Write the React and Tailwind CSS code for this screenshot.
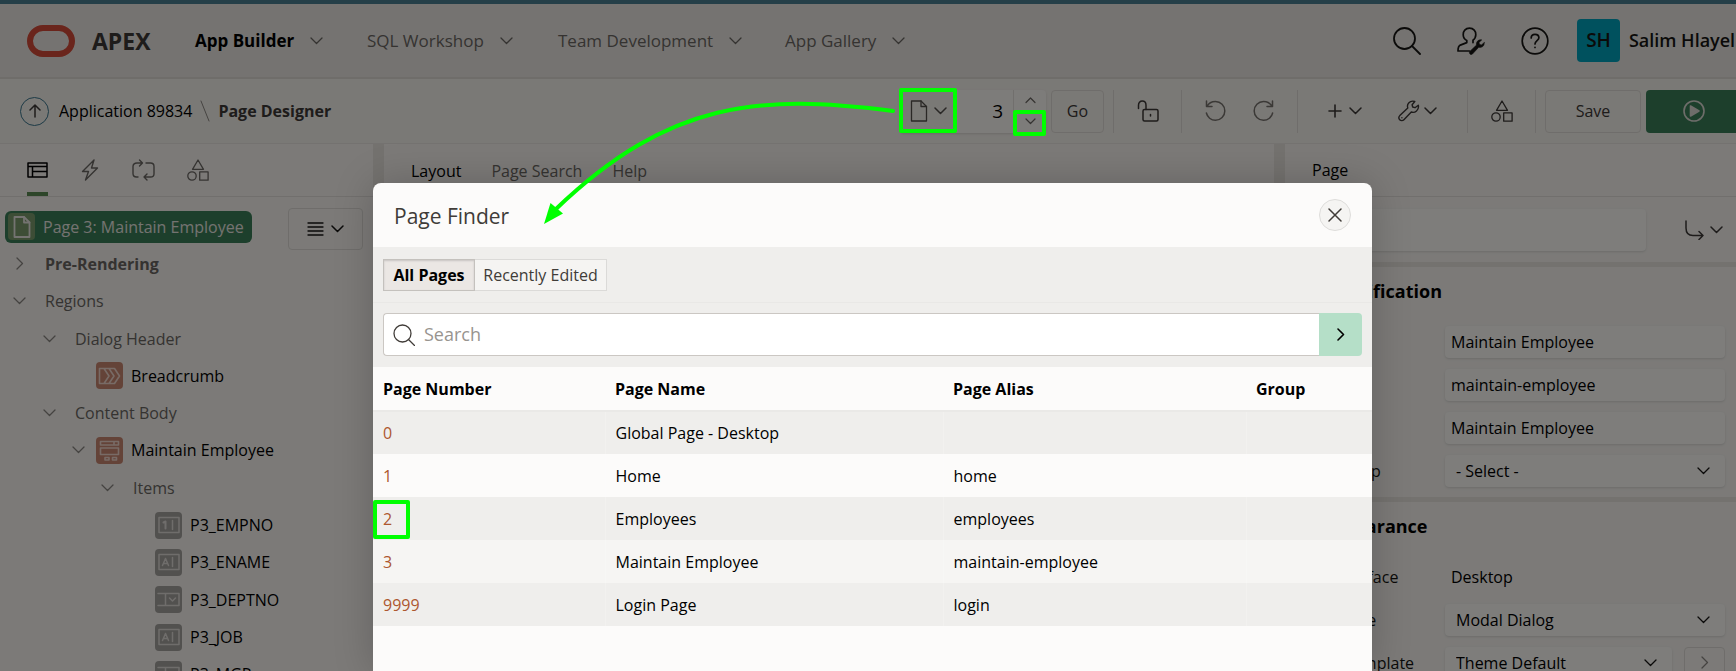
import React from "react";

function Icon({ w, h = w, sw = 1.3, className = "", children }) {
  return (
    <svg
      width={w}
      height={h}
      viewBox={`0 0 ${w} ${h}`}
      fill="none"
      stroke="currentColor"
      strokeWidth={sw}
      strokeLinecap="round"
      strokeLinejoin="round"
      aria-hidden="true"
      className={`shrink-0 ${className}`}
    >
      {children}
    </svg>
  );
}

const ChevronDown = ({ className = "", sw = 1.3 }) => (
  <Icon w={13} h={8} sw={sw} className={className}>
    <path d="M1 1l5.500 5.500L12 1" />
  </Icon>
);
const ChevronRight = ({ className = "", sw = 1.3 }) => (
  <Icon w={8} h={13} sw={sw} className={className}>
    <path d="M1 1l5.500 5.500L1 12" />
  </Icon>
);
const Shapes = ({ className = "" }) => (
  <Icon w={22} h={22} className={className}>
    <path d="M11 1l5.500 9.300h-11z" />
    <circle cx="5" cy="17" r="4.200" />
    <path d="M12.700 12.900h8.400v8.300h-8.400z" />
  </Icon>
);
const PageIcon = ({ sw = 1.3 }) => (
  <Icon w={18} h={22} sw={sw}>
    <path d="M1.500 1h9.500l5.500 5.500V21h-15z" />
    <path d="M11 1v5.500h5.500" />
  </Icon>
);
const Wrench = () => (
  <Icon w={22} h={22} sw={1.4}>
    <path d="M20.300 5.200l-3.300 2.500-2.300-.7-.6-2.300 2.700-3.200c-2.400-.7-4.700-.1-6.100 1.500-1.300 1.500-1.500 3.300-.9 5L1.800 15.600c-1.100 1.200-1.100 3-.1 4.100 1.100 1.200 3.100 1.200 4.200 0l7.400-7.700c1.700.6 3.800.2 5.200-1.100 1.600-1.500 2.300-3.600 1.800-5.700z" />
    <path d="M3.900 17.600v.1" />
  </Icon>
);

const NAV = ["App Builder", "SQL Workshop", "Team Development", "App Gallery"];

function Header() {
  return (
    <header className="flex h-[75px] shrink-0 items-center border-b-2 border-[#dedad5] bg-[#eae7e2] pl-[27px]">
      <a href="#home" className="flex w-[168px] items-center gap-[17px]">
        <svg width="48" height="32" viewBox="0 0 48 32" fill="none" aria-hidden="true">
          <rect x="3" y="3" width="42" height="26" rx="13" stroke="#d44a38" strokeWidth="6" />
        </svg>
        <span className="text-[23px] leading-8 font-bold text-[#3c3836]">APEX</span>
      </a>
      <nav className="grid grid-cols-[172px_191px_227px_auto]">
        {NAV.map((item, i) => (
          <button
            key={item}
            className={`flex items-center gap-4 text-left text-[17px] whitespace-nowrap ${
              i === 0 ? "font-bold text-black" : "text-[#6b6763]"
            }`}
          >
            {item}
            <ChevronDown className="text-[#6b6763]" />
          </button>
        ))}
      </nav>
      <div className="ml-auto flex items-center">
        <button aria-label="Search" className="mr-9">
          <Icon w={28} sw={1.8}>
            <circle cx="11.500" cy="11.500" r="10.500" />
            <path d="M19 19l8 8" />
          </Icon>
        </button>
        <button aria-label="Administration" className="mr-9">
          <Icon w={28} sw={1.7}>
            <path d="M12.500 1.200c4 0 6.500 3 6.300 6.500-.1 2.200-1 4.200-2.800 5.400M12.500 1.200C8.500 1.200 6 4.200 6.200 7.700c.1 2.500 1.400 4.700 3.600 5.700v2.200l-6.500 2.500C1.500 19 1 20.500 1 24h11.500M16 13.100v2.500" />
            <path
              d="M27.200 15.700l-2.900 2.300-1.900-.7-.4-1.900 2.700-2.500c-2.600-.6-5.200 1-5.300 4.100l.1 1.100-6.700 6.300c-1.400 1.400.9 4.200 2.600 2.700l6.300-6.800c3.400.7 5.900-1.500 5.500-4.600z"
              fill="currentColor"
              strokeWidth="0.600"
            />
          </Icon>
        </button>
        <button aria-label="Help" className="mr-7">
          <Icon w={28} sw={1.7}>
            <circle cx="14" cy="14" r="12.800" />
            <path d="M10.200 11c0-2.200 1.600-3.700 3.800-3.700s3.900 1.400 3.900 3.500c0 2.800-3.900 3-3.900 6.200" />
            <path d="M14 20.300v.2" />
          </Icon>
        </button>
        <button className="flex items-center gap-2 text-[18px] font-semibold whitespace-nowrap">
          <span className="flex size-[43px] items-center justify-center rounded-sm bg-[#00a2bc] text-[19px]">SH</span>
          <span className="w-[108px]">Salim Hlayel</span>
        </button>
      </div>
    </header>
  );
}

function Toolbar() {
  return (
    <div className="flex h-[65px] shrink-0 items-center justify-between border-b border-[#e9e5e0] bg-[#f5f2ed] text-[#3c3836]">
      <nav aria-label="Breadcrumb" className="flex items-center pl-5 text-base whitespace-nowrap">
        <a href="#up" aria-label="Up" className="flex size-[29px] items-center justify-center rounded-full border border-[#39758c]">
          <Icon w={12} h={14} sw={1.5}>
            <path d="M6 13V1M1 6l5-5 5 5" />
          </Icon>
        </a>
        <a href="#app" className="ml-[10px] text-black">Application 89834</a>
        <Icon w={10} h={22} sw={1} className="mx-2 text-[#8b8782]">
          <path d="M1 1l8 20" />
        </Icon>
        <span className="font-bold">Page Designer</span>
      </nav>
      <div className="flex h-[43px] items-stretch">
        <div className="flex w-[146px] rounded-sm bg-[#faf8f5] shadow">
          <button aria-label="Page Finder" className="flex w-14 items-center justify-center gap-[6px] bg-[#f5f2ed] text-[#55514d]">
            <PageIcon />
            <ChevronDown sw={1.5} />
          </button>
          <input
            aria-label="Page number"
            defaultValue="3"
            className="w-[57px] min-w-0 bg-transparent pr-[10px] text-right text-[19px] text-black"
          />
          <div className="flex flex-1 flex-col border-l border-[#e3dfda] text-[#6b6763]">
            <button aria-label="Next page" className="flex flex-1 items-center justify-center">
              <Icon w={11} h={7} sw={1.2}><path d="M1 5.500L5.500 1 10 5.500" /></Icon>
            </button>
            <button aria-label="Previous page" className="flex flex-1 items-center justify-center">
              <Icon w={11} h={7} sw={1.2}><path d="M1 1l4.500 4.500L10 1" /></Icon>
            </button>
          </div>
        </div>
        <button className="mr-[9px] ml-[5px] w-[53px] rounded-sm border border-[#dfdbd6] text-base">Go</button>
        <button aria-label="Lock page" className="flex w-[68px] items-center justify-center border-l border-[#dfdbd6]">
          <Icon w={22} h={22} sw={1.5}>
            <rect x="6" y="9.500" width="15" height="11.500" rx="1.500" />
            <path d="M1.500 8.500V5.200C1.500 2.700 3 1 5.200 1S9 2.700 9 5.200v4.300M13.500 14.500v1.500" />
          </Icon>
        </button>
        <div className="flex w-[116px] items-center justify-center gap-[27px] border-l border-[#dfdbd6] text-[#76726d]">
          <button aria-label="Undo">
            <Icon w={21} h={22} sw={1.5}>
              <path d="M1.500 1v5.500H7M2 6.500C3.500 3.500 6.700 1.500 10.500 1.500c5.200 0 9.300 4.200 9.300 9.400s-4.100 9.400-9.300 9.400c-4.500 0-8.200-3.100-9.100-7.300" />
            </Icon>
          </button>
          <button aria-label="Redo">
            <Icon w={21} h={22} sw={1.5} className="-scale-x-100">
              <path d="M1.500 1v5.500H7M2 6.500C3.500 3.500 6.700 1.500 10.500 1.500c5.200 0 9.300 4.200 9.300 9.400s-4.100 9.400-9.300 9.400c-4.500 0-8.200-3.100-9.100-7.300" />
            </Icon>
          </button>
        </div>
        <div className="flex w-[170px] items-center justify-center gap-9 border-l border-[#dfdbd6]">
          <button aria-label="Create" className="flex items-center gap-[7px]">
            <Icon w={14} sw={1.6}><path d="M7 1v12M1 7h12" /></Icon>
            <ChevronDown sw={1.5} />
          </button>
          <button aria-label="Utilities" className="flex items-center gap-1">
            <Wrench />
            <ChevronDown sw={1.5} />
          </button>
        </div>
        <button aria-label="Shared Components" className="flex w-[68px] items-center justify-center border-l border-[#dfdbd6]">
          <Shapes />
        </button>
        <div className="flex border-l border-[#dfdbd6] pl-[9px]">
          <button className="w-24 rounded-sm border border-[#dfdbd6] text-base">Save</button>
          <button aria-label="Save and Run Page" className="ml-[5px] flex w-[90px] items-center justify-center rounded-l-sm bg-[#3b7f58] pl-[6px] text-[#dcdad5]">
            <Icon w={22} sw={1.6}>
              <circle cx="11" cy="11" r="10" />
              <path d="M7.500 6v10l8.500-5z" fill="currentColor" />
            </Icon>
          </button>
        </div>
      </div>
    </div>
  );
}

const FieldGlyph = ({ kind }) => (
  <Icon w={24} h={18} sw={1.5}>
    {kind === "list" ? (
      <path d="M1 2.500h21v12H1M8.500 2.500v12M12.500 7l3 3 3-3" />
    ) : (
      <>
        <path d="M2 1.500h20v15H2zM15.500 4.500v9" />
        {kind === "number" ? <path d="M6.500 6.500l2-1v7" strokeWidth="2" /> : <path d="M5.500 12.500L8.500 5.500l3 7M6.500 10.500h4" />}
      </>
    )}
  </Icon>
);
const CrumbGlyph = () => (
  <Icon w={23} h={18} sw={1.6}>
    <path d="M1.500 1.500h4.500l5 7.500-5 7.500H1.500zM6 1.500h5l5 7.500-5 7.500H6M11 1.500h5.500L21.500 9l-5 7.500H11" />
  </Icon>
);
const FormGlyph = () => (
  <Icon w={21} h={21} sw={1.6}>
    <path d="M1.500 1.500h18v3.500h-18zM1.500 8h18v6.500h-18zM6 17.500h4v2.500H6zM13.500 17.500h4v2.500h-4zM15 1.500v3.500" />
  </Icon>
);

const TREE = [
  { label: "Pre-Rendering", pad: "pl-4", gap: "w-[29px]", open: false, bold: true },
  { label: "Regions", pad: "pl-[13px]", gap: "w-8", open: true },
  { label: "Dialog Header", pad: "pl-[43px]", gap: "w-8", open: true },
  { label: "Breadcrumb", pad: "pl-24", icon: <CrumbGlyph />, tone: "bg-[#c98770] text-[#f0d6cc]" },
  { label: "Content Body", pad: "pl-[43px]", gap: "w-8", open: true },
  { label: "Maintain Employee", pad: "pl-[72px]", gap: "w-6", open: true, icon: <FormGlyph />, tone: "bg-[#c98770] text-[#f0d6cc]" },
  { label: "Items", pad: "pl-[101px]", gap: "w-8", open: true },
  { label: "P3_EMPNO", pad: "pl-[155px]", icon: <FieldGlyph kind="number" />, tone: "bg-[#a5a29e] text-[#dedbd7]" },
  { label: "P3_ENAME", pad: "pl-[155px]", icon: <FieldGlyph kind="text" />, tone: "bg-[#a5a29e] text-[#dedbd7]" },
  { label: "P3_DEPTNO", pad: "pl-[155px]", icon: <FieldGlyph kind="list" />, tone: "bg-[#a5a29e] text-[#dedbd7]" },
  { label: "P3_JOB", pad: "pl-[155px]", icon: <FieldGlyph kind="text" />, tone: "bg-[#a5a29e] text-[#dedbd7]" },
  { label: "P3_MGR", pad: "pl-[155px]", icon: <FieldGlyph kind="list" />, tone: "bg-[#a5a29e] text-[#dedbd7]" },
];

function TreePane() {
  return (
    <aside className="flex w-[373px] shrink-0 flex-col overflow-hidden bg-[#f8f5f1]">
      <div className="flex h-[53px] shrink-0 items-stretch border-b border-[#e3dfda] pl-[27px] text-[#6b6763]">
        <button aria-label="Rendering" className="mr-[33px] flex items-center border-b-4 border-[#5a8a52] pt-1 text-black">
          <Icon w={21} h={16} sw={1.5}>
            <path d="M1 1h19v14H1zM1 4.500h19M5.500 4.500V15M5.500 9.500H20" />
          </Icon>
        </button>
        <button aria-label="Dynamic Actions" className="mr-[33px] flex items-center">
          <Icon w={18} h={22} sw={1.4}>
            <path d="M13 1L1.500 12.500h6L4.500 21 16.500 9h-6z" />
          </Icon>
        </button>
        <button aria-label="Processing" className="mr-8 flex items-center">
          <Icon w={23} h={22} sw={1.4}>
            <path d="M10.500 4H5C2.700 4 1 5.200 1 7.500v7C1 16.800 2.500 18 4.500 18H6M7.500 1l3 3-3 3M14 4h4.500C20.800 4 22 5.200 22 7.500V15c0 2-1.500 3-3.500 3H12M15 15l-3 3 3 3" />
          </Icon>
        </button>
        <button aria-label="Page Shared Components" className="flex items-center">
          <Shapes />
        </button>
      </div>
      <div className="flex shrink-0 pt-[11px]">
        <ul className="grid h-[485px] flex-1 auto-rows-fr text-base whitespace-nowrap">
          <li className="flex items-center pl-[5px]">
            <button className="flex h-8 items-center gap-2 rounded-md bg-[#3b7f58] pr-2 pl-[3px] text-[#e8e6e2]">
              <span className="flex size-[27px] items-center justify-center rounded-sm bg-[#7a9b6d]">
                <PageIcon sw={1.8} />
              </span>
              Page 3: Maintain Employee
            </button>
          </li>
          {TREE.map((n) => (
            <li key={n.label} className={`flex items-center ${n.pad} ${n.icon ? "text-black" : "text-[#6b6763]"}`}>
              {n.gap && (
                <span className={`flex ${n.gap} text-[#8b8782]`}>{n.open ? <ChevronDown /> : <ChevronRight />}</span>
              )}
              {n.icon && (
                <span className={`mr-2 flex size-[27px] shrink-0 items-center justify-center rounded-sm ${n.tone}`}>{n.icon}</span>
              )}
              <span className={n.bold ? "font-bold" : ""}>{n.label}</span>
            </li>
          ))}
        </ul>
        <button aria-label="Tree menu" className="mr-[10px] flex h-[42px] w-[75px] items-center justify-center gap-[7px] rounded-sm border border-[#dfdbd6]">
          <Icon w={17} h={14} sw={1.3}>
            <path d="M1 1h15M1 5h15M1 9h15M1 13h15" />
          </Icon>
          <ChevronDown sw={1.5} />
        </button>
      </div>
    </aside>
  );
}

const inputCls = "h-8 w-full min-w-0 rounded-sm bg-[#fcfaf7] text-base text-black shadow";

function TextRow({ label, value }) {
  return (
    <label className="flex h-[43px] items-center">
      <span className="w-[152px] shrink-0">{label}</span>
      <input defaultValue={value} className={`${inputCls} px-[6px]`} />
    </label>
  );
}

function SelectRow({ label, value, children }) {
  return (
    <div className="flex h-[43px] items-center">
      <label className="flex min-w-0 flex-1 items-center">
        <span className="w-[152px] shrink-0">{label}</span>
        <span className="grid min-w-0 flex-1 items-center">
          <select className={`${inputCls} col-start-1 row-start-1 appearance-none px-[11px]`}>
            <option>{value}</option>
          </select>
          <ChevronDown className="pointer-events-none col-start-1 row-start-1 mr-[15px] justify-self-end" />
        </span>
      </label>
      {children}
    </div>
  );
}

function PropertyPane() {
  return (
    <aside className="flex w-[451px] shrink-0 flex-col overflow-hidden bg-[#f8f5f1] text-base whitespace-nowrap">
      <div className="flex h-[53px] shrink-0 items-center border-b border-[#e3dfda] pl-[27px] text-black">
        <button>Page</button>
      </div>
      <div className="flex h-[65px] shrink-0 items-center justify-between pr-[13px] pl-2">
        <input aria-label="Filter properties" placeholder="Filter" className="h-[42px] w-[353px] rounded-sm bg-[#fcfaf7] px-3 shadow" />
        <button aria-label="Go to Group" className="flex items-center gap-[6px] text-[#3c3836]">
          <Icon w={19} h={20} sw={1.5}>
            <path d="M1 1v7c0 5 2 7.500 7 7.500h10M14 11.500l4 4-4 4" />
          </Icon>
          <ChevronDown sw={1.5} />
        </button>
      </div>
      <section className="flex shrink-0 flex-col border-t-[5px] border-[#e8e4df] pr-[11px] pb-[5px] pl-2">
        <h2 className="flex h-[53px] items-center pb-1 pl-[27px] text-[18px] font-bold text-black">Identification</h2>
        <TextRow label="Name" value="Maintain Employee" />
        <TextRow label="Alias" value="maintain-employee" />
        <TextRow label="Title" value="Maintain Employee" />
        <SelectRow label="Page Group" value="- Select -" />
      </section>
      <section className="flex shrink-0 flex-col border-t-[5px] border-[#e8e4df] pr-[11px] pl-2">
        <h2 className="flex h-[53px] items-center pb-1 pl-[27px] text-[18px] font-bold text-black">Appearance</h2>
        <div className="flex h-[43px] items-center">
          <span className="w-[152px]">User Interface</span>
          <span className="pl-[6px] text-black">Desktop</span>
        </div>
        <SelectRow label="Page Mode" value="Modal Dialog" />
        <SelectRow label="Dialog Template" value="Theme Default">
          <button aria-label="Open template" className="ml-3 flex h-8 w-[41px] items-center justify-center rounded-sm border border-[#dfdbd6] text-[#8b8782]">
            <ChevronRight />
          </button>
        </SelectRow>
      </section>
    </aside>
  );
}

const PAGES = [
  ["0", "Global Page - Desktop", "", "bg-[#efeeec]"],
  ["1", "Home", "home", "bg-[#fcfbfa]"],
  ["2", "Employees", "employees", "bg-[#efeeec]"],
  ["3", "Maintain Employee", "maintain-employee", "bg-[#f6f5f3]"],
  ["9999", "Login Page", "login", "bg-[#efeeec]"],
];

function PageFinder() {
  return (
    <div
      role="dialog"
      aria-modal="true"
      aria-labelledby="finder-title"
      className="flex-1 overflow-hidden rounded-t-lg bg-[#fcfbfa] text-base text-[#161513] shadow-[0_0_40px_rgba(0,0,0,0.2)]"
    >
      <div className="flex h-16 items-center justify-between px-[21px]">
        <h1 id="finder-title" className="pt-1 text-[21px] text-[#403c38]">Page Finder</h1>
        <button aria-label="Close" className="flex size-8 items-center justify-center rounded-full border border-[#dedddb] bg-[#f5f4f2] text-[#403c38]">
          <Icon w={14} sw={1.5}><path d="M1 1l12 12M13 1L1 13" /></Icon>
        </button>
      </div>
      <div className="flex h-14 items-center border-b border-[#e9e8e6] bg-[#efeeec] px-[10px]">
        <button className="h-8 w-[92px] border border-[#c4c1bd] bg-[#ebe7e4] font-bold text-black shadow-[inset_0_1px_2px_rgba(0,0,0,0.15)]">All Pages</button>
        <button className="h-8 w-[132px] border border-l-0 border-[#dbdad8] bg-[#f5f4f2] text-[#403c38]">Recently Edited</button>
      </div>
      <form className="flex h-16 items-start bg-[#efeeec] px-[10px] pt-[10px]">
        <label className="flex h-[43px] flex-1 items-center rounded-l-sm border border-r-0 border-[#cbc7c3] bg-white pl-[9px]">
          <Icon w={22} className="text-[#403c38]">
            <circle cx="9.500" cy="9.500" r="8.500" />
            <path d="M15.500 15.500l6 6" />
          </Icon>
          <input type="search" aria-label="Search" placeholder="Search" className="ml-[9px] flex-1 text-[18px] outline-none placeholder:text-[#98948f]" />
        </label>
        <button aria-label="Go" type="button" className="flex size-[43px] items-center justify-center rounded-r-sm bg-[#b5dfc8] text-black">
          <Icon w={8} h={13} sw={1.6}><path d="M1 1l5.500 5.500L1 12" /></Icon>
        </button>
      </form>
      <table className="w-full table-fixed text-left">
        <thead>
          <tr className="h-[44px] border-b-2 border-[#eae9e7] text-black">
            <th className="w-[232px] px-[10px] font-bold">Page Number</th>
            <th className="w-[338px] px-[10px] font-bold">Page Name</th>
            <th className="w-[303px] px-[10px] font-bold">Page Alias</th>
            <th className="px-[10px] font-bold">Group</th>
          </tr>
        </thead>
        <tbody>
          {PAGES.map(([id, name, alias, bg]) => (
            <tr key={id} className={`h-[43px] text-black ${bg}`}>
              <td className="border-r border-white/20 px-[10px]">
                <a href={`#page-${id}`} className="text-[#ad572f]">{id}</a>
              </td>
              <td className="border-r border-white/20 px-[10px]">{name}</td>
              <td className="border-r border-white/20 px-[10px]">{alias}</td>
              <td />
            </tr>
          ))}
        </tbody>
      </table>
    </div>
  );
}

function Annotations() {
  return (
    <svg
      className="pointer-events-none absolute top-0 left-0"
      width="1736"
      height="671"
      fill="none"
      stroke="#00ff00"
      strokeWidth="4"
      strokeLinecap="round"
      strokeLinejoin="round"
      aria-hidden="true"
    >
      <path d="M893 107C760 90 670 96 556 205" />
      <path d="M544 220l6.500-21 12.500 10.500z" fill="#00ff00" stroke="none" />
      <path d="M901 86h54v41h-54zM1015 108h29v22h-29zM375 498h33v35h-33z" />
    </svg>
  );
}

export default function App() {
  return (
    <div className="relative flex h-screen flex-col overflow-hidden border-t-4 border-[#253f48] bg-[#f8f5f1] font-['Open_Sans','Noto_Sans',sans-serif] text-[#161513]">
      <Header />
      <Toolbar />
      <main className="flex min-h-0 flex-1">
        <TreePane />
        <div className="w-[11px] shrink-0 bg-[#e8e4df]" />
        <section className="min-w-0 flex-1">
          <div className="flex h-[53px] items-center gap-[30px] pl-[27px] text-base text-[#6b6763]">
            <button className="text-black">Layout</button>
            <button>Page Search</button>
            <button>Help</button>
          </div>
        </section>
        <div className="w-[11px] shrink-0 bg-[#e8e4df]" />
        <PropertyPane />
      </main>
      <div className="absolute inset-0 flex bg-black/50 pt-[179px] pr-[364px] pl-[373px]">
        <PageFinder />
      </div>
      <Annotations />
    </div>
  );
}
